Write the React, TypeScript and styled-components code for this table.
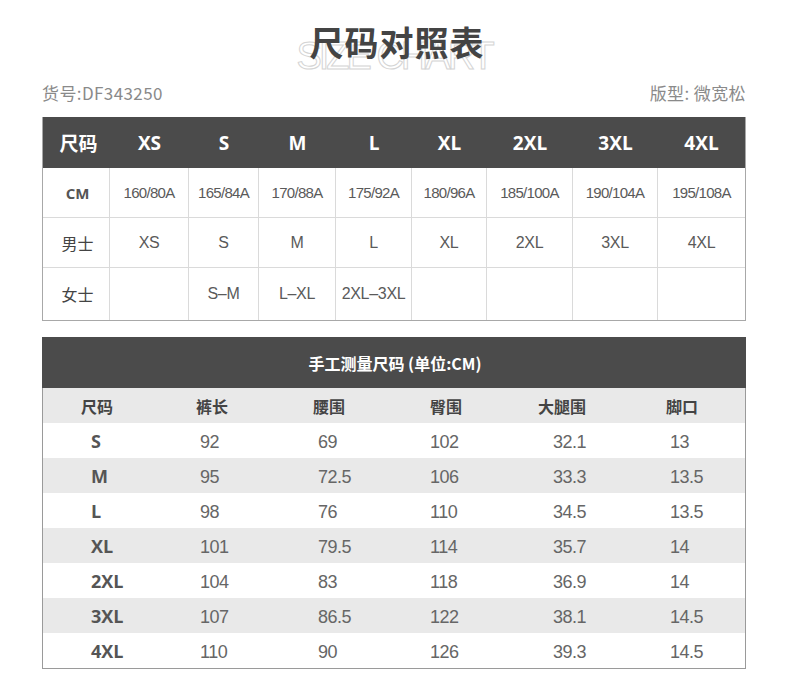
import React from "react";
import styled, { createGlobalStyle } from "styled-components";

const GlobalStyle = createGlobalStyle`
  body {
    margin: 0;
    background: #fff;
    font-family: "Noto Sans CJK SC", sans-serif;
  }
`;

const Page = styled.div`
  width: 704px;
  margin-left: 42px;
`;

const TitleBlock = styled.div`
  position: relative;
  height: 78px;
  display: flex;
  justify-content: center;
  padding-top: 23px;
  box-sizing: border-box;
`;

const Watermark = styled.div`
  position: absolute;
  left: 0;
  right: 0;
  top: 33px;
  text-align: center;
  font-family: "Liberation Sans", sans-serif;
  font-size: 38px;
  line-height: 46px;
  letter-spacing: -3px;
  color: transparent;
  -webkit-text-stroke: 1px #d4d4d4;
  z-index: 0;
`;

const Title = styled.h1`
  position: relative;
  z-index: 1;
  margin: 0 0 0 6px;
  font-size: 34px;
  line-height: 38px;
  font-weight: 700;
  color: #444;
  letter-spacing: 1px;
`;

const Meta = styled.div`
  display: flex;
  justify-content: space-between;
  height: 30px;
  line-height: 30px;
  font-size: 17px;
  letter-spacing: 0.4px;
  color: #8a8a8a;
  margin-bottom: 9px;
`;

const SizeGrid = styled.div`
  display: grid;
  grid-template-columns: 67px 79px 70px 77px 76px 75px 86px 85px 87px;
  border: 1px solid #a8a8a8;
  border-top: none;
`;

const HeadCell = styled.div<{ $first?: boolean }>`
  height: 51px;
  background: #4b4b4b;
  color: #fff;
  display: flex;
  align-items: center;
  justify-content: center;
  font-family: ${(p) => (p.$first ? '"Noto Sans CJK SC"' : '"Open Sans"')}, sans-serif;
  font-size: 19px;
  font-weight: 700;
  padding-left: ${(p) => (p.$first ? "4px" : "0")};
`;

const Cell = styled.div<{ $last?: boolean; $bottom?: boolean; $h: number; $big?: boolean }>`
  height: ${(p) => p.$h}px;
  box-sizing: border-box;
  border-right: ${(p) => (p.$last ? "none" : "1px solid #dadada")};
  border-bottom: ${(p) => (p.$bottom ? "none" : "1px solid #dadada")};
  display: flex;
  align-items: center;
  justify-content: center;
  font-family: "Liberation Sans", sans-serif;
  font-size: ${(p) => (p.$big ? "16px" : "15px")};
  letter-spacing: ${(p) => (p.$big ? "-0.3px" : "-0.7px")};
  color: #5a5a5a;
`;

const RowLabel = styled.span<{ $latin?: boolean }>`
  font-family: ${(p) => (p.$latin ? '"Open Sans"' : '"Noto Sans CJK SC"')}, sans-serif;
  font-size: ${(p) => (p.$latin ? "15px" : "16px")};
  font-weight: ${(p) => (p.$latin ? 700 : 400)};
  color: ${(p) => (p.$latin ? "#555" : "#444")};
  letter-spacing: 0;
  padding-left: 3px;
`;

const Measure = styled.div`
  margin-top: 16px;
  border: 1px solid #9a9a9a;
  border-top: none;
`;

const MeasureHead = styled.div`
  height: 51px;
  margin: 0 -1px;
  background: #4b4b4b;
  color: #fff;
  display: flex;
  align-items: center;
  justify-content: center;
  font-size: 16px;
  font-weight: 700;
  padding-left: 2px;
`;

const MRow = styled.div<{ $shade?: boolean }>`
  display: grid;
  grid-template-columns: 109px 118px 112px 123px 117px 1fr;
  padding-left: 48px;
  height: 35px;
  align-items: center;
  background: ${(p) => (p.$shade ? "#e9e9e9" : "#fff")};
`;

const MLabel = styled.div<{ $dx: number }>`
  margin-left: ${(p) => p.$dx}px;
  font-size: 16px;
  font-weight: 700;
  color: #444;
`;

const MValue = styled.div<{ $bold?: boolean }>`
  font-family: ${(p) => (p.$bold ? '"Open Sans"' : '"Liberation Sans"')}, sans-serif;
  font-size: 18px;
  line-height: 22px;
  font-weight: ${(p) => (p.$bold ? 700 : 400)};
  letter-spacing: ${(p) => (p.$bold ? "0" : "-0.5px")};
  color: ${(p) => (p.$bold ? "#555" : "#666")};
  padding-top: ${(p) => (p.$bold ? "0" : "2px")};
`;

const sizes = ["XS", "S", "M", "L", "XL", "2XL", "3XL", "4XL"];

const chartRows: { label: string; latin?: boolean; cells: string[] }[] = [
  {
    label: "CM",
    latin: true,
    cells: ["160/80A", "165/84A", "170/88A", "175/92A", "180/96A", "185/100A", "190/104A", "195/108A"],
  },
  { label: "男士", cells: ["XS", "S", "M", "L", "XL", "2XL", "3XL", "4XL"] },
  { label: "女士", cells: ["", "S–M", "L–XL", "2XL–3XL", "", "", "", ""] },
];

const rowHeights = [50, 50, 52];

const labels = [
  { text: "尺码", dx: -10 },
  { text: "裤长", dx: -4 },
  { text: "腰围", dx: -5 },
  { text: "臀围", dx: 0 },
  { text: "大腿围", dx: -15 },
  { text: "脚口", dx: -4 },
];

const measures = [
  ["S", "92", "69", "102", "32.1", "13"],
  ["M", "95", "72.5", "106", "33.3", "13.5"],
  ["L", "98", "76", "110", "34.5", "13.5"],
  ["XL", "101", "79.5", "114", "35.7", "14"],
  ["2XL", "104", "83", "118", "36.9", "14"],
  ["3XL", "107", "86.5", "122", "38.1", "14.5"],
  ["4XL", "110", "90", "126", "39.3", "14.5"],
];

export default function App() {
  return (
    <>
      <GlobalStyle />
      <Page>
        <TitleBlock>
          <Watermark>SIZE CHART</Watermark>
          <Title>尺码对照表</Title>
        </TitleBlock>
        <Meta>
          <span>货号:DF343250</span>
          <span>版型: 微宽松</span>
        </Meta>

        <SizeGrid>
          <HeadCell $first>尺码</HeadCell>
          {sizes.map((s) => (
            <HeadCell key={s}>{s}</HeadCell>
          ))}
          {chartRows.map((row, r) => (
            <React.Fragment key={row.label}>
              <Cell $h={rowHeights[r]} $bottom={r === chartRows.length - 1}>
                <RowLabel $latin={row.latin}>{row.label}</RowLabel>
              </Cell>
              {row.cells.map((c, i) => (
                <Cell
                  key={i}
                  $h={rowHeights[r]}
                  $big={r > 0}
                  $last={i === row.cells.length - 1}
                  $bottom={r === chartRows.length - 1}
                >
                  {c}
                </Cell>
              ))}
            </React.Fragment>
          ))}
        </SizeGrid>

        <Measure>
          <MeasureHead>手工测量尺码 (单位:CM)</MeasureHead>
          <MRow $shade>
            {labels.map((l) => (
              <MLabel key={l.text} $dx={l.dx}>
                {l.text}
              </MLabel>
            ))}
          </MRow>
          {measures.map((row, r) => (
            <MRow key={row[0]} $shade={r % 2 === 1}>
              {row.map((v, i) => (
                <MValue key={i} $bold={i === 0}>
                  {v}
                </MValue>
              ))}
            </MRow>
          ))}
        </Measure>
      </Page>
    </>
  );
}
